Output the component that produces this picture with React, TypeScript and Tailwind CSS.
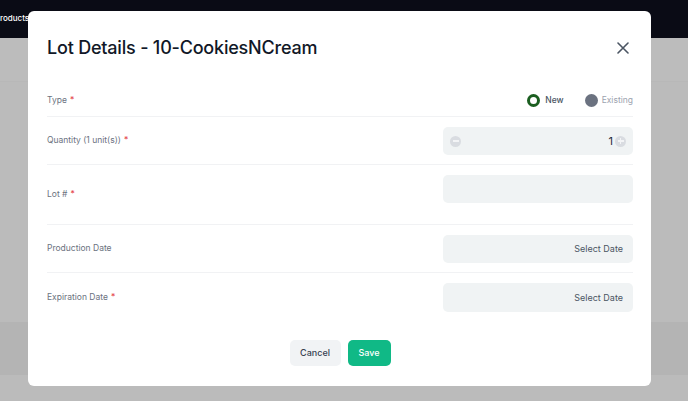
import React from "react";

function Req() {
  return <span className="text-[#e5484d] ml-[3px]">*</span>;
}

function Row({
  label,
  required,
  children,
  extra,
  last,
}: {
  label: string;
  required?: boolean;
  children: React.ReactNode;
  extra?: boolean;
  last?: boolean;
}) {
  return (
    <div className={`flex items-center justify-between ${last ? "" : "border-b border-[#f1f2f4]"}`}>
      <div className="text-[8.5px] text-[#6b7280] leading-none">
        {label}
        {required && <Req />}
      </div>
      <div className={`w-[190px] pt-[10px] ${extra ? "pb-[21px]" : "pb-[9px]"}`}>{children}</div>
    </div>
  );
}

export default function App() {
  return (
    <div className="relative w-[688px] h-[401px] overflow-hidden bg-[#bbbbbb] font-['Inter',sans-serif]">
      <div className="h-[38px] bg-[#0a0b15] flex items-center">
        <span className="text-[8px] text-white font-medium -mt-[2px]">roducts</span>
      </div>
      <div className="h-[44px] bg-[#bcbcbc] border-b border-[#b8b8b8]" />
      <div className="h-[240px]" />
      <div className="h-[53px] bg-[#b4b4b4]" />

      <div className="absolute left-[28px] top-[11px] w-[623px] h-[375px] bg-white rounded-[6px] pl-[19px] pr-[18px] flex flex-col">
        <div className="flex items-center justify-between pt-[20px] h-[53px]">
          <h1 className="text-[18px] font-medium text-[#111827] leading-[24px] tracking-[-0.2px]">
            Lot Details - 10-CookiesNCream
          </h1>
          <svg width="12" height="12" viewBox="0 0 12 12" className="mr-[4px] mt-[1px]">
            <path d="M1 1L11 11M11 1L1 11" stroke="#4b5563" strokeWidth="1.6" strokeLinecap="round" />
          </svg>
        </div>

        <div className="mt-[20px] flex flex-col">
          <div className="flex items-center justify-between h-[33px] border-b border-[#f1f2f4]">
            <div className="text-[8.5px] text-[#6b7280] leading-none">
              Type
              <Req />
            </div>
            <div className="flex items-center">
              <div className="w-[13px] h-[13px] rounded-full border-[3px] border-[#1b5e20] bg-white" />
              <span className="ml-[5px] text-[8.5px] font-medium text-[#4b5563]">New</span>
              <div className="ml-[21px] w-[13px] h-[13px] rounded-full bg-[#6b7280]" />
              <span className="ml-[4px] text-[8.5px] text-[#9ca3af]">Existing</span>
            </div>
          </div>

          <Row label="Quantity (1 unit(s))" required>
            <div className="h-[28px] rounded-[5px] bg-[#f0f3f4] flex items-center px-[7px]">
              <div className="w-[11px] h-[11px] rounded-full bg-[#d9dce1] flex items-center justify-center">
                <div className="w-[6px] h-[1.5px] bg-[#f3f4f6]" />
              </div>
              <div className="flex-1 text-right text-[11px] text-[#1f2937] pr-[2px]">1</div>
              <div className="w-[11px] h-[11px] rounded-full bg-[#d9dce1] flex items-center justify-center relative">
                <div className="w-[6px] h-[1.5px] bg-[#f3f4f6]" />
                <div className="absolute w-[1.5px] h-[6px] bg-[#f3f4f6]" />
              </div>
            </div>
          </Row>

          <Row label="Lot #" required extra>
            <div className="h-[28px] rounded-[5px] bg-[#f0f3f4]" />
          </Row>

          <Row label="Production Date">
            <div className="h-[28px] rounded-[5px] bg-[#f0f3f4] flex items-center justify-end pr-[10px] text-[9px] text-[#4b5563]">
              Select Date
            </div>
          </Row>

          <Row label="Expiration Date" required last>
            <div className="h-[29px] rounded-[5px] bg-[#f0f3f4] flex items-center justify-end pr-[10px] text-[9px] text-[#4b5563]">
              Select Date
            </div>
          </Row>
        </div>

        <div className="flex justify-center gap-[7px] mt-[19px]">
          <button className="h-[26px] w-[51px] rounded-[5px] bg-[#f1f3f5] text-[9px] font-medium text-[#374151]">
            Cancel
          </button>
          <button className="h-[26px] w-[43px] rounded-[5px] bg-[#10b986] text-[9px] font-medium text-white">
            Save
          </button>
        </div>
      </div>
    </div>
  );
}
